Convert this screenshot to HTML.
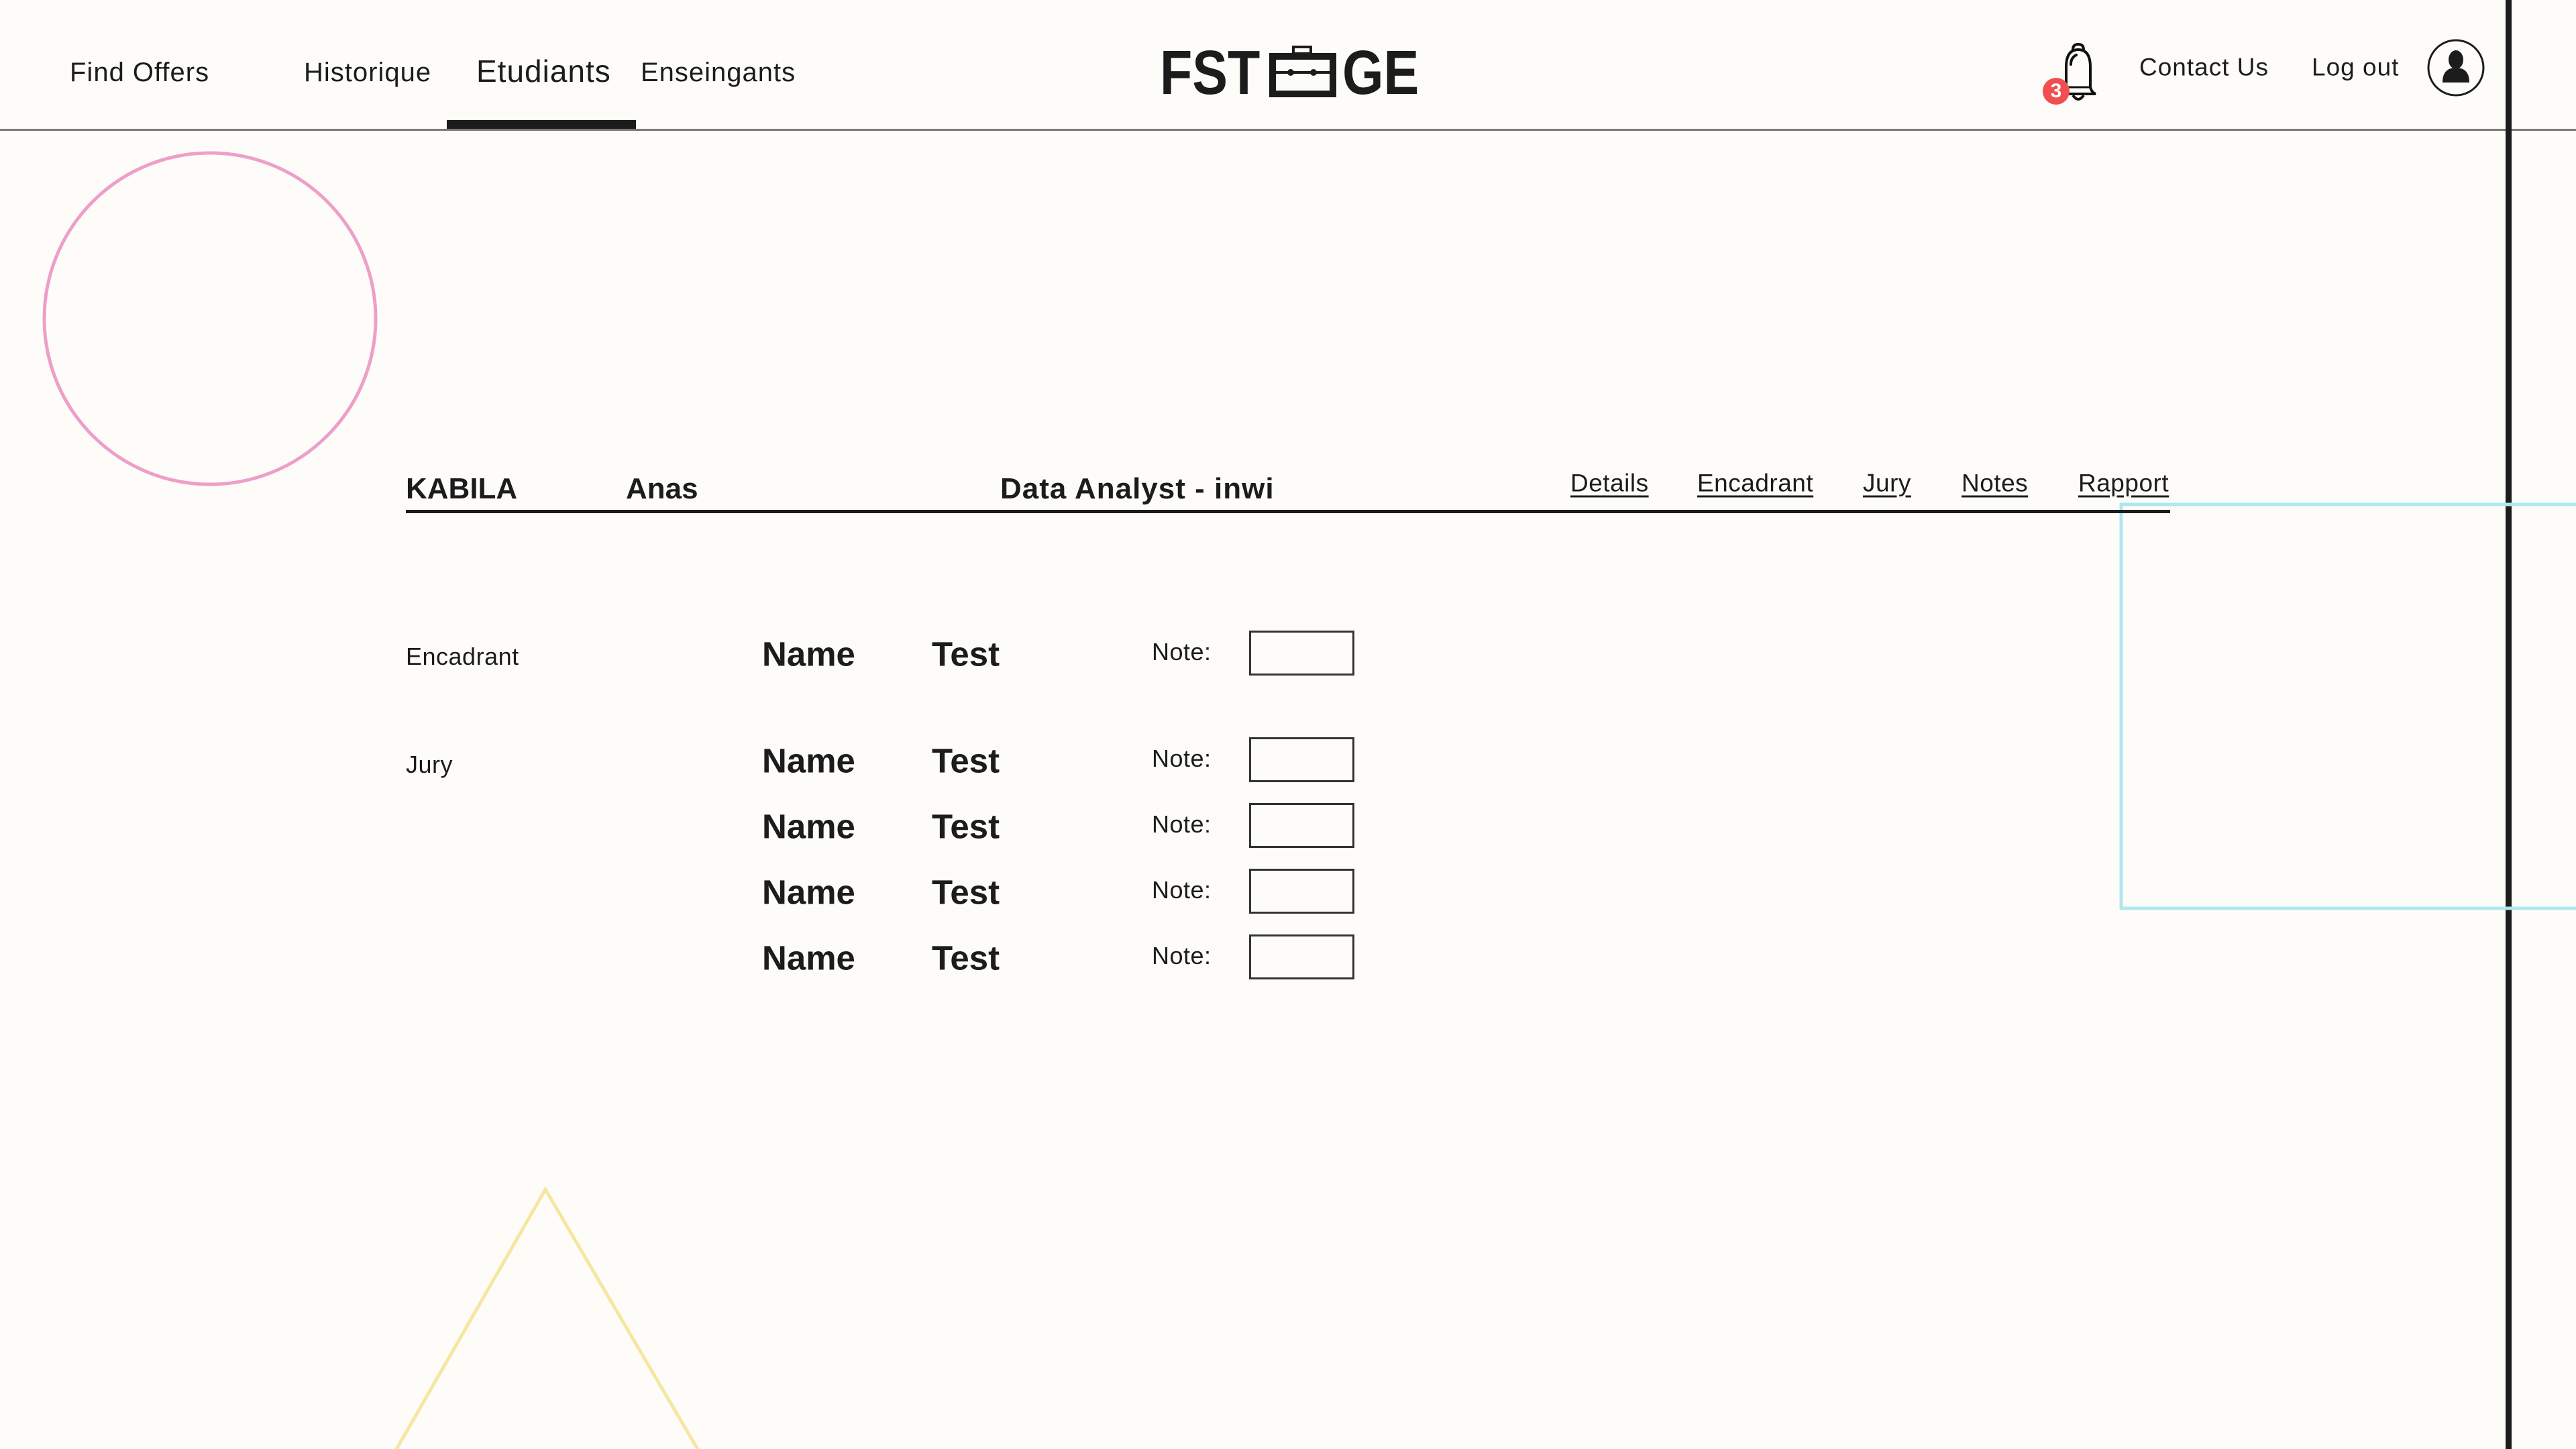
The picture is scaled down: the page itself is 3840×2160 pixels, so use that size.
<!DOCTYPE html>
<html><head><meta charset="utf-8"><style>
*{margin:0;padding:0;box-sizing:border-box}
body{width:3840px;height:2160px;background:#fdfcf9;position:relative;overflow:hidden;font-family:"Liberation Sans",sans-serif;color:#1c1c1c}
.a{position:absolute;white-space:nowrap;line-height:1}
.nav{font-size:40px;transform:translateY(-50%);letter-spacing:1px}
.b{font-weight:bold}
.lnk{font-size:37px;text-decoration:underline;text-underline-offset:6px;transform:translateY(-50%);letter-spacing:0.5px}
.lab{font-size:36px;transform:translateY(-50%);letter-spacing:0.5px}
.nm{font-size:51px;font-weight:bold;transform:translateY(-50%)}
.box{position:absolute;width:157px;height:67px;border:3px solid #333}
.logo{font-size:93px;font-weight:bold;transform-origin:0 0;transform:scaleX(0.85)}
</style></head><body>
<div class="a nav" style="left:104px;top:108px">Find Offers</div>
<div class="a nav" style="left:453px;top:108px">Historique</div>
<div class="a nav" style="left:710px;top:106px;font-size:46px">Etudiants</div>
<div class="a nav" style="left:955px;top:108px">Enseingants</div>
<div class="a" style="left:666px;top:179px;width:282px;height:14px;background:#1c1c1c"></div>
<div class="a" style="left:0;top:192px;width:3840px;height:3px;background:#7a7a72"></div>
<div class="a" style="left:3735px;top:0;width:9px;height:2160px;background:#1c1c1c"></div>

<div class="a logo" style="left:1729px;top:62px">FST</div>
<svg class="a" style="left:1890px;top:68px" width="104" height="80" viewBox="0 0 104 80">
<rect x="38" y="2" width="26" height="10" fill="none" stroke="#1c1c1c" stroke-width="4"/>
<rect x="7" y="16" width="90" height="56" fill="none" stroke="#1c1c1c" stroke-width="10"/>
<line x1="10" y1="40" x2="94" y2="40" stroke="#1c1c1c" stroke-width="4"/>
<circle cx="34" cy="40" r="5" fill="#1c1c1c"/><circle cx="68" cy="40" r="5" fill="#1c1c1c"/>
</svg>
<div class="a logo" style="left:2001px;top:62px">GE</div>

<svg class="a" style="left:3060px;top:60px" width="90" height="110" viewBox="0 0 90 110">
<path d="M30 14 q0-8 8-8 q8 0 8 8" fill="none" stroke="#111" stroke-width="4"/>
<path d="M20 70 L20 40 Q20 14 38 14 Q56 14 56 40 L56 70 Q58 78 64 80 L14 80 Q18 78 20 70Z" fill="none" stroke="#111" stroke-width="4"/>
<line x1="20" y1="70" x2="56" y2="70" stroke="#111" stroke-width="3"/>
<path d="M30 82 q8 12 16 0" fill="none" stroke="#111" stroke-width="4"/>
<path d="M27 36 q0-10 8-14" fill="none" stroke="#111" stroke-width="4" stroke-linecap="round"/>
</svg>
<div class="a" style="left:3045px;top:116px;width:40px;height:40px;border-radius:50%;background:#f04f4f;color:#fff;font-weight:bold;font-size:30px;text-align:center;line-height:40px">3</div>
<div class="a nav" style="left:3189px;top:100px;font-size:37px">Contact Us</div>
<div class="a nav" style="left:3446px;top:100px;font-size:37px">Log out</div>
<svg class="a" style="left:3617px;top:57px" width="88" height="88" viewBox="0 0 88 88">
<circle cx="44" cy="44" r="41" fill="none" stroke="#1c1c1c" stroke-width="3"/>
<ellipse cx="44" cy="32" rx="11" ry="14" fill="#1c1c1c"/>
<path d="M24 66 Q24 44 44 44 Q64 44 64 66Z" fill="#1c1c1c"/>
</svg>

<svg class="a" style="left:0;top:0" width="3840" height="2160">
<circle cx="313" cy="475" r="247" fill="none" stroke="#ee9fc8" stroke-width="5"/>
<rect x="3162" y="752" width="800" height="602" fill="none" stroke="#aee8ee" stroke-width="5"/>
<polyline points="590,2162 813,1773 1041,2162" fill="none" stroke="#f7e6a0" stroke-width="5"/>
</svg>

<div class="a b" style="left:605px;top:707px;font-size:44px">KABILA</div>
<div class="a b" style="left:933px;top:707px;font-size:44px">Anas</div>
<div class="a b" style="left:1491px;top:707px;font-size:44px;letter-spacing:1px">Data Analyst - inwi</div>
<div class="a lnk" style="left:2341px;top:720px">Details</div>
<div class="a lnk" style="left:2530px;top:720px">Encadrant</div>
<div class="a lnk" style="left:2777px;top:720px">Jury</div>
<div class="a lnk" style="left:2924px;top:720px">Notes</div>
<div class="a lnk" style="left:3098px;top:720px">Rapport</div>
<div class="a" style="left:605px;top:760px;width:2630px;height:5px;background:#1c1c1c"></div>

<div class="a lab" style="left:605px;top:979px">Encadrant</div>
<div class="a lab" style="left:605px;top:1140px">Jury</div>

<div class="a nm" style="left:1136px;top:975px">Name</div><div class="a nm" style="left:1389px;top:975px">Test</div><div class="a lab" style="left:1717px;top:972px">Note:</div><div class="box" style="left:1862px;top:940px"></div>
<div class="a nm" style="left:1136px;top:1134px">Name</div><div class="a nm" style="left:1389px;top:1134px">Test</div><div class="a lab" style="left:1717px;top:1131px">Note:</div><div class="box" style="left:1862px;top:1099px"></div>
<div class="a nm" style="left:1136px;top:1232px">Name</div><div class="a nm" style="left:1389px;top:1232px">Test</div><div class="a lab" style="left:1717px;top:1229px">Note:</div><div class="box" style="left:1862px;top:1197px"></div>
<div class="a nm" style="left:1136px;top:1330px">Name</div><div class="a nm" style="left:1389px;top:1330px">Test</div><div class="a lab" style="left:1717px;top:1327px">Note:</div><div class="box" style="left:1862px;top:1295px"></div>
<div class="a nm" style="left:1136px;top:1428px">Name</div><div class="a nm" style="left:1389px;top:1428px">Test</div><div class="a lab" style="left:1717px;top:1425px">Note:</div><div class="box" style="left:1862px;top:1393px"></div>
</body></html>
